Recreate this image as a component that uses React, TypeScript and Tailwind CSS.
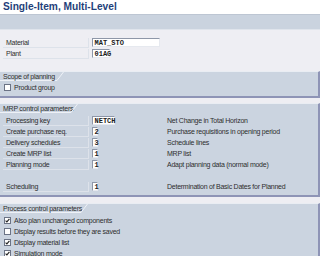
import React from "react";

const F = { fontFamily: '"Liberation Sans", Arial, sans-serif' };

function Label({ text }: { text: string }) {
  return (
    <div className="ml-[3px] w-[86px] h-[10px] border-b border-r border-[#dde2ea] pl-[3px] flex items-center text-[7px] tracking-[-0.25px] text-[#2e2e2e] leading-none whitespace-nowrap">
      {text}
    </div>
  );
}

function Input({ value, w }: { value: string; w: number }) {
  return (
    <div
      className="ml-[3px] h-[9px] bg-white border-t border-l border-[#8e97a8] border-b border-r border-b-[#e6e9ef] border-r-[#e6e9ef] flex items-center pl-[1.5px] text-[7px] font-bold text-[#1a1a1a] leading-[8px] whitespace-nowrap"
      style={{ width: w, fontFamily: '"Liberation Mono", monospace' }}
    >
      {value}
    </div>
  );
}

function FieldRow({ label, value, w, desc }: { label: string; value: string; w: number; desc?: string }) {
  return (
    <div className="flex items-center h-[11px]">
      <Label text={label} />
      <div className="w-[78px] flex items-center">
        <Input value={value} w={w} />
      </div>
      {desc && <div className="text-[7px] tracking-[-0.25px] text-[#2e2e2e] leading-none whitespace-nowrap">{desc}</div>}
    </div>
  );
}

function Check({ checked, label }: { checked: boolean; label: string }) {
  return (
    <div className="flex items-center h-[11px] pl-[4px]">
      <div className="w-[7px] h-[7px] bg-white border border-[#6b7385] flex items-center justify-center">
        {checked && (
          <svg width="5" height="5" viewBox="0 0 5 5">
            <path d="M0.6 2.6 L1.9 3.9 L4.4 0.8" stroke="#222" strokeWidth="1.1" fill="none" />
          </svg>
        )}
      </div>
      <div className="ml-[3px] text-[7px] tracking-[-0.25px] text-[#2e2e2e] leading-none whitespace-nowrap">{label}</div>
    </div>
  );
}

function Section({ title, tabW, h, children }: { title: string; tabW: number; h: number; children?: React.ReactNode }) {
  return (
    <div
      className="bg-[#cbd4e0] border-t border-t-[#e9edf3] border-r-2 border-r-[#8e94b6] border-b-2 border-b-[#8e94b6] flex flex-col shrink-0"
      style={{ height: h }}
    >
      <div className="relative h-[9px] flex items-center">
        <div
          className="h-[9px] border-b border-[#eef1f6] pl-[3px] flex items-center text-[7px] tracking-[-0.25px] text-[#2e2e2e] leading-none whitespace-nowrap"
          style={{ width: tabW }}
        >
          {title}
        </div>
        <svg width="7" height="9" viewBox="0 0 7 9" className="block">
          <path d="M0 8.5 L6.5 0" stroke="#eef1f6" strokeWidth="1" fill="none" />
        </svg>
      </div>
      {children}
    </div>
  );
}

export default function App() {
  return (
    <div className="w-[320px] h-[256px] overflow-hidden bg-[#eeeef3] flex flex-col" style={F}>
      <div className="h-[14px] shrink-0 bg-white pl-[3px] flex items-center text-[10.2px] font-bold text-[#1f3f7a] leading-none">
        Single-Item, Multi-Level
      </div>
      <div className="h-[16px] shrink-0 bg-[#cad3df] border-t border-[#bdc6d3] border-b border-b-[#dfe4ec]" />
      <div className="pt-[7px] h-[41px] shrink-0">
        <FieldRow label="Material" value="MAT_STO" w={68} />
        <FieldRow label="Plant" value="01AG" w={18} />
      </div>
      <Section title="Scope of planning" tabW={57} h={27}>
        <div className="mt-[1px]">
          <Check checked={false} label="Product group" />
        </div>
      </Section>
      <div className="h-[5px] shrink-0" />
      <Section title="MRP control parameters" tabW={71} h={94}>
        <div className="mt-[2px]">
          <FieldRow label="Processing key" value="NETCH" w={23} desc="Net Change in Total Horizon" />
          <FieldRow label="Create purchase req." value="2" w={6} desc="Purchase requisitions in opening period" />
          <FieldRow label="Delivery schedules" value="3" w={6} desc="Schedule lines" />
          <FieldRow label="Create MRP list" value="1" w={6} desc="MRP list" />
          <FieldRow label="Planning mode" value="1" w={6} desc="Adapt planning data (normal mode)" />
          <div className="h-[11px]" />
          <FieldRow label="Scheduling" value="1" w={6} desc="Determination of Basic Dates for Planned" />
        </div>
      </Section>
      <div className="h-[6px] shrink-0" />
      <Section title="Process control parameters" tabW={81} h={80}>
        <div className="mt-[2px]">
          <Check checked={true} label="Also plan unchanged components" />
          <Check checked={false} label="Display results before they are saved" />
          <Check checked={true} label="Display material list" />
          <Check checked={true} label="Simulation mode" />
        </div>
      </Section>
    </div>
  );
}
